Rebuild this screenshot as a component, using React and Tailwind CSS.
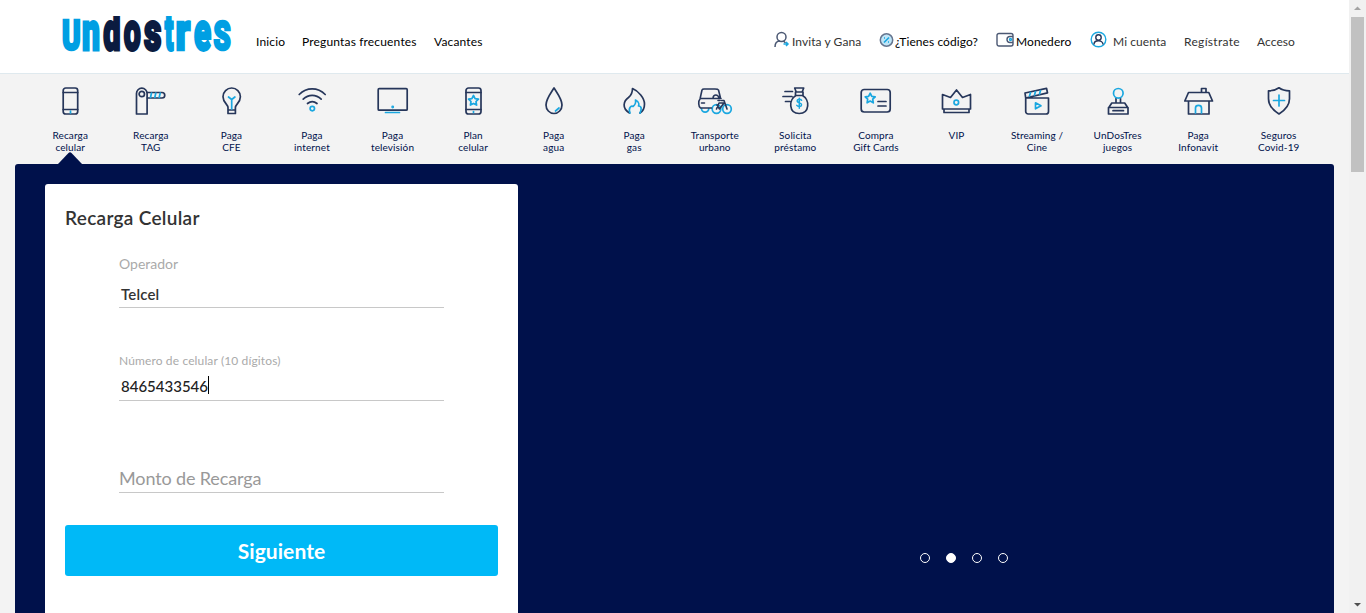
const navy = '#26365a';
const sky = '#1aa7e0';

function Icon({ children }) {
  return (
    <svg className="block h-8 w-10" viewBox="0 0 40 32" fill="none" stroke={navy} strokeWidth="1.7" strokeLinejoin="round" strokeLinecap="round">
      {children}
    </svg>
  );
}

const star = 'M0 -5 L1.6 -1.8 L5 -1.4 L2.5 1 L3.1 4.6 L0 2.9 L-3.1 4.6 L-2.5 1 L-5 -1.4 L-1.6 -1.8 Z';

const services = [
  ['Recarga', 'celular', <>
    <rect x="13.2" y="3" width="14.5" height="26" rx="2.500" /><path d="M13.2 7.500h14.500M13.2 24.500h14.500" /><path d="M20.500 26v2" stroke={sky} />
  </>],
  ['Recarga', 'TAG', <>
    <path d="M5.500 29V8.500a5.300 5.300 0 0 1 10.600 0V29Z" /><circle cx="10.800" cy="9" r="2.700" /><path d="M16.500 7.500H31a2.700 2.700 0 0 1 0 5.500H16.500" /><path d="M19.500 12.500l1-4.500M23.800 12.500l1-4.500M28.200 12.500l1-4.500" stroke={sky} />
  </>],
  ['Paga', 'CFE', <>
    <path d="M17 25v-2.500c0-3-5-5-5-10.800a8.700 8.700 0 0 1 17.400 0c0 5.800-5 7.800-5 10.800V25ZM17.500 28.500H24M17 25v3.500M24.400 25v3.500" /><path d="M20.700 24v-9.500l-3.200-2.500M20.700 14.500l3.200-2.500" stroke={sky} />
  </>],
  ['Paga', 'internet', <>
    <path d="M7.200 9.500c7.500-7.500 18.500-7.500 26 0M11.200 14.200c5.200-5 12.800-5 18 0M15.500 18.500c3-2.500 6.500-2.500 9.500 0" /><circle cx="20.300" cy="23.600" r="2.200" stroke={sky} />
  </>],
  ['Paga', 'televisión', <>
    <rect x="5.200" y="3.700" width="29" height="21.500" rx="1" /><path d="M12.500 27.500h14" stroke={sky} /><circle cx="19.700" cy="22" r=".6" stroke={sky} fill={sky} />
  </>],
  ['Plan', 'celular', <>
    <rect x="13" y="3" width="15" height="26" rx="2.500" /><path d="M13 7.500h15M13 24.500h15" /><path d="M20.500 26.500v1" stroke={sky} /><path d={star} transform="translate(20.500 15.500)" stroke={sky} />
  </>],
  ['Paga', 'agua', <>
    <path d="M20 3c-3 5-8 11-8 17a8 8.500 0 0 0 16 0c0-6-5-12-8-17Z" /><path d="M21.500 26l3.500-3" stroke={sky} />
  </>],
  ['Paga', 'gas', <>
    <path d="M15.500 28c-8-5-6-12-1-15.500 2.500-2 4-5 4-9 6 2.500 12 9.500 12 15.500 0 4-2 7.500-4.500 9" /><path d="M16 28c-2-5 1-7.500 3-6.500 2-1.500 3-4 2.500-6.500 4 2 3.500 5 3 6 3 0 3.500 3 1.500 7" stroke={sky} />
  </>],
  ['Transporte', 'urbano', <>
    <path d="M6.500 23.500a3.600 3.600 0 1 0 7.300 0" stroke={sky} /><circle cx="21.500" cy="24" r="4.300" stroke={sky} /><circle cx="32" cy="24" r="4.300" stroke={sky} /><path d="M16.500 23H5.500C3.500 22 3 16 5 14l2-9c.5-1 1-1 2-1h11c2 0 3 0 3.500 1l2 8M5 13.500h21M6.500 18h3M18 13c.5-4 5-4 6 0M21.500 24l2.500-6h5l-4.500 6-2.500-4M32 24l-3-8.500h-2.500M23 15.500h2" strokeWidth="1.600" />
  </>],
  ['Solicita', 'préstamo', <>
    <path d="M19.700 3h9l-1.500 4h-6ZM20.500 7h7.500v3.500h-7.500ZM21 10.500c-7.500 4-7.500 18 3.200 18s10.800-14 3.300-18M10 6.500h7.500M8 11.500h9M10.500 16.500h4.500" /><path d="M26.600 15.300c-1-1.500-4.500-1.300-4.500.8 0 2.200 4.500 1.400 4.500 3.700 0 2-3.500 2.300-4.800.6M24.300 13.300v10" stroke={sky} strokeWidth="1.500" />
  </>],
  ['Compra', 'Gift Cards', <>
    <rect x="5.200" y="4.500" width="29" height="22.500" rx="3" /><path d="M22 16.500h8M22 21h8" /><path d={star} transform="translate(14.200 13.200)" stroke={sky} />
  </>],
  ['VIP', '', <>
    <path d="M6.500 24V9.500l8 3 6-7.500 6 7.500 8-3V24ZM8 24v3.500h25V24" /><circle cx="20.300" cy="17.500" r="2.300" stroke={sky} />
  </>],
  ['Streaming /', 'Cine', <>
    <path d="M8.700 13h22.800V26.500a2.500 2.500 0 0 1-2.500 2.500H11.200a2.500 2.500 0 0 1-2.500-2.500ZM8.700 13L8 8l21.500-4.700 1 4.500Z" /><path d="M12.500 11l1-3.500M17.500 10l1-3.500M22.500 9l1-3.500M18.500 17.800v6l5.500-3Z" stroke={sky} />
  </>],
  ['UnDosTres', 'juegos', <>
    <path d="M18 13.500v4.500M22.500 13.500v4.500M10.500 29v-6.500H30V29ZM10.800 22.500l3-4.500h12.900l3 4.500M15 25.700h10.500" /><circle cx="20.300" cy="8.300" r="4.800" stroke={sky} />
  </>],
  ['Paga', 'Infonavit', <>
    <path d="M10.500 16v13H31V16M6.800 16l3.700-8.500h20.300l3.700 8.500ZM23.500 7.500v-4H28v4" /><path d="M17.500 28v-5c0-3.500 6-3.500 6 0v5" stroke={sky} />
  </>],
  ['Seguros', 'Covid-19', <>
    <path d="M20 2.800c-3 2.200-6.500 3-10.500 3v8c0 6.500 4.500 11.500 10.500 15.200 6-3.700 10.500-8.700 10.500-15.200v-8c-4 0-7.500-.8-10.500-3Z" /><path d="M20 10v11M14.500 15.500h11" stroke={sky} />
  </>],
];

// glyph, x offset, horizontal scale, font size
const letters = [
  ['U', 62, 0.67, 42], ['n', 82, 0.59, 54], ['d', 103.3, 0.57, 54], ['o', 123.8, 0.56, 54], ['s', 144.1, 0.63, 54],
  ['t', 164.7, 0.47, 54], ['r', 175.6, 0.72, 54], ['e', 194, 0.58, 54], ['S', 213.6, 0.67, 41],
];

function Logo() {
  return (
    <svg className="block h-[73px] w-[174px] shrink-0" viewBox="61 0 174 73" aria-label="Undostres" fontFamily="Roboto" fontWeight="900" strokeWidth="2.3">
      <clipPath id="logo-height"><rect x="61" y="16" width="174" height="37" /></clipPath>
      <g clipPath="url(#logo-height)">
        {letters.map(([c, x, sx, size], i) => {
          const color = i > 1 && i < 5 ? '#0b1b40' : '#009fe3';
          return (
            <text key={i} transform={`translate(${x} 50.1) scale(${sx} 1)`} fontSize={size} fill={color} stroke={color} vectorEffect="non-scaling-stroke">{c}</text>
          );
        })}
      </g>
    </svg>
  );
}

export default function App() {
  return (
    <div className="flex h-[613px] w-[1366px] overflow-hidden bg-[#f3f3f3] font-['Lato',sans-serif] text-black">
      <div className="flex w-[1349px] flex-col">
        <header className="flex h-[74px] shrink-0 border-b border-[#dfe9ee] bg-white pl-[61px] text-[12px] leading-4">
          <Logo />
          <nav className="ml-[21px] flex pt-[34px] tracking-[0.16px] whitespace-nowrap">
            <a className="w-[46px]">Inicio</a>
            <a className="w-[132px]">Preguntas frecuentes</a>
            <a>Vacantes</a>
          </nav>
          <nav className="mr-[54px] ml-auto flex pt-[34px] tracking-[0.07px] whitespace-nowrap">
            <a className="flex w-[105px] text-[#333]">
              <svg className="-mt-[3px] mr-[2px] h-[18px] w-4" viewBox="0 0 16 18" fill="none" stroke="#4b5873" strokeWidth="1.5"><circle cx="7.500" cy="6" r="4.500" /><path d="M1 16c0-4 2-6 5-6M9.500 10l2 2" /><path d="M9.500 13h4.500M12 11l2 2-2 2" stroke={sky} /></svg>
              Invita y Gana
            </a>
            <a className="flex w-[117px]">
              <svg className="-mt-[2px] mr-[1px] h-4 w-[15px]" viewBox="0 0 15 16" fill="none"><circle cx="7.500" cy="8" r="6.200" fill="#bfe5f7" stroke="#65758f" strokeWidth="1.500" /><path d="M5 10.500l5-5M5 6h1M9 10h1" stroke={sky} strokeWidth="1.600" /></svg>
              ¿Tienes código?
            </a>
            <a className="flex w-[94px]">
              <svg className="-mt-[2px] mr-[1px] h-4 w-[19px]" viewBox="0 0 19 16" fill="none" stroke="#4b5873" strokeWidth="1.400"><rect x="1" y="1.500" width="16" height="12.500" rx="2" /><path d="M17 4.500h-3a3 3 0 0 0 0 6h3" /><circle cx="14.500" cy="7.500" r="1" stroke={sky} /></svg>
              Monedero
            </a>
            <a className="flex w-[94px] text-[#333]">
              <svg className="-mt-[3px] mr-[6px] h-[17px] w-[17px]" viewBox="0 0 17 17" fill="none"><circle cx="8.500" cy="8.500" r="7.300" stroke={sky} strokeWidth="1.400" /><circle cx="8.500" cy="6.500" r="2.700" stroke={navy} strokeWidth="1.400" /><path d="M4 13.500c0-5 9-5 9 0" stroke={navy} strokeWidth="1.400" /></svg>
              Mi cuenta
            </a>
            <a className="w-[73px] tracking-[0.3px] text-[#333]">Regístrate</a>
            <a className="text-[#333]">Acceso</a>
          </nav>
        </header>
        <nav className="flex h-[90px] shrink-0 pl-[30px]">
          {services.map(([a, b, art], i) => (
            <div key={i} className="relative flex w-[80.570px] shrink-0 flex-col items-center pt-[11px] text-center text-[10px] leading-3 tracking-[0.12px] text-[#00114b]">
              <Icon>{art}</Icon>
              <div className="mt-3 whitespace-nowrap">{a}<br />{b}</div>
              {i === 0 && <svg className="absolute top-[78px] left-7 h-3 w-6" viewBox="0 0 24 12"><path d="M0 12L10.500 1q1.500-1.500 3 0L24 12Z" fill="#00114b" /></svg>}
            </div>
          ))}
        </nav>
        <main className="mx-[15px] flex h-[449px] w-[1319px] rounded-t-[3px] bg-[#00114b]">
          <section className="mt-5 ml-[30px] w-[473px] rounded-t-[3px] bg-white px-5 pt-[22px]">
            <h1 className="text-[19px] leading-6 font-semibold tracking-[0.3px] text-[#333]">Recarga Celular</h1>
            <div className="mt-[17px] ml-[54px] w-[325px]">
              <div className="h-[61px] border-b border-[#c8c8c8]">
                <div className="pt-[7px] text-[14px] leading-5 text-[#aaa]">Operador</div>
                <div className="mt-[10px] pl-[2px] text-[15px] leading-5 font-semibold tracking-[0.15px] text-[#333]">Telcel</div>
              </div>
              <div className="mt-[43px] h-[50px] border-b border-[#c8c8c8]">
                <div className="text-[12px] leading-5 tracking-[0.13px] text-[#aaa]">Número de celular (10 dígitos)</div>
                <div className="mt-[5px] flex pl-[2px] text-[15px] leading-5 font-medium text-[#222]">8465433546<span className="h-[18px] w-px bg-black" /></div>
              </div>
              <div className="mt-[65px] h-[27px] border-b border-[#c8c8c8] text-[18px] leading-6 tracking-[-0.13px] text-[#999]">Monto de Recarga</div>
            </div>
            <button className="mt-8 block h-[51px] w-[433px] rounded-[3px] bg-[#00b9f7] text-[21px] font-bold tracking-[0.05px] text-white">Siguiente</button>
          </section>
          <div className="mt-[389px] ml-[402px] flex gap-4">
            {[0, 1, 2, 3].map((i) => <span key={i} className={i === 1 ? 'h-[10px] w-[10px] rounded-full border border-white bg-white' : 'h-[10px] w-[10px] rounded-full border border-white'} />)}
          </div>
        </main>
      </div>
      <div className="flex w-[17px] flex-col items-center justify-between bg-[#f1f1f1]">
        <div className="flex flex-col items-center">
          <svg className="h-[17px] w-[17px]" viewBox="0 0 17 17"><path d="M5 10h7L8.500 6.500Z" fill="#a3a3a3" /></svg>
          <div className="h-[155px] w-[13px] bg-[#c1c1c1]" />
        </div>
        <svg className="h-[17px] w-[17px]" viewBox="0 0 17 17"><path d="M5 7h7l-3.500 3.500Z" fill="#505050" /></svg>
      </div>
    </div>
  );
}
